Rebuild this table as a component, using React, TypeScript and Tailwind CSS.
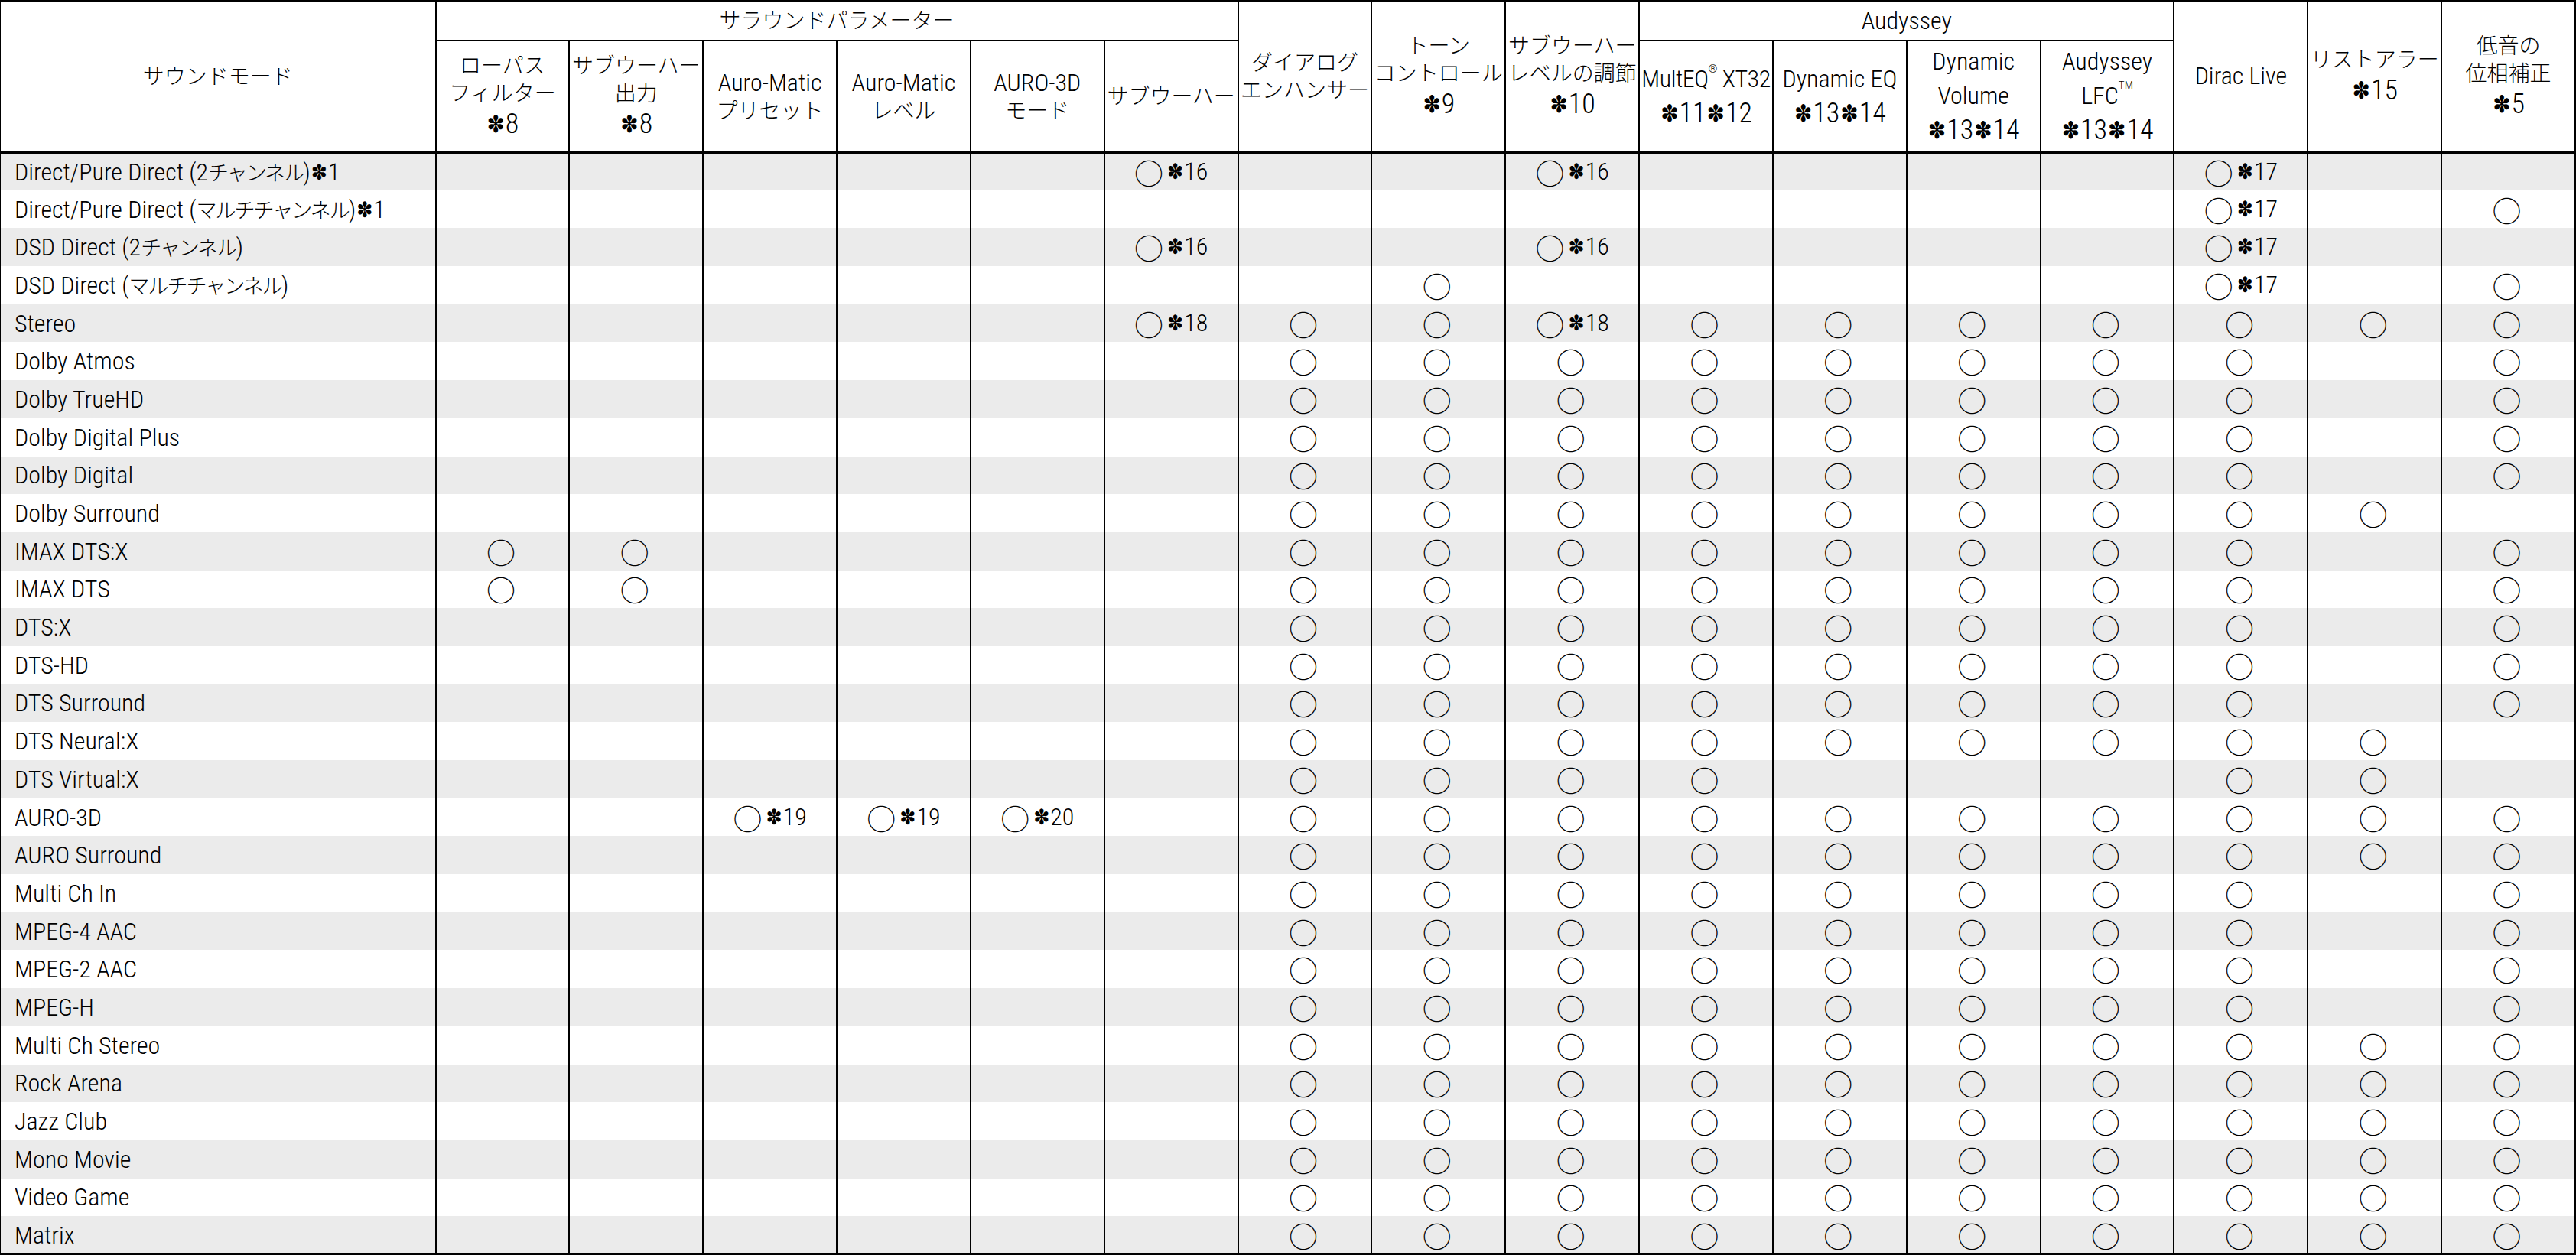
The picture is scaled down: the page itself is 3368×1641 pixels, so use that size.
import React from "react";

const JP = /[\u3040-\u30ff\u3400-\u9fff\uff00-\uffef]+|✽|○/g;

function Rich({ text, jp = "text-[28px]", big = false }: { text: string; jp?: string; big?: boolean }) {
  const out: React.ReactNode[] = [];
  let last = 0;
  let m: RegExpExecArray | null;
  let k = 0;
  JP.lastIndex = 0;
  while ((m = JP.exec(text)) !== null) {
    if (m.index > last) out.push(<span key={k++}>{text.slice(last, m.index)}</span>);
    const s = m[0];
    if (s === "✽") {
      out.push(<Ast key={k++} big={big} />);
    } else if (s === "○") {
      out.push(<Circ key={k++} />);
    } else {
      out.push(
        <span key={k++} className={jp}>
          {s}
        </span>
      );
    }
    last = m.index + s.length;
  }
  if (last < text.length) out.push(<span key={k++}>{text.slice(last)}</span>);
  return <>{out}</>;
}

function Ast({ big }: { big: boolean }) {
  return big ? (
    <span className="inline-block font-['DejaVu_Sans'] font-normal text-[31px] leading-none align-[1px] mx-[1px]">✽</span>
  ) : (
    <span className="inline-block font-['DejaVu_Sans'] font-normal text-[28px] leading-none align-[1px] mx-[1px]">✽</span>
  );
}

function Circ() {
  return (
    <span className="inline-block font-['Noto_Sans_CJK_JP'] font-light text-[38px] leading-none align-[-6px] mr-[4px]">○</span>
  );
}

type Line = { t: string; h: string; big?: boolean };

function HeadLines({ lines }: { lines: Line[] }) {
  return (
    <div className="flex flex-col items-center">
      {lines.map((l, i) => (
        <div key={i} className={"whitespace-nowrap " + l.h}>
          <Rich text={l.t} big={!!l.big} />
        </div>
      ))}
    </div>
  );
}

const J = "leading-[35px]";
const L = "leading-[45px]";
const A = "leading-[44px] text-[36px]";
const AL = "leading-[45px] text-[36px]";

const O = "○";
const std = (r: string, b: string) => ["", "", "", "", "", "", O, O, O, O, O, O, O, O, r, b];

const rows: [string, string[]][] = [
  ["Direct/Pure Direct (2チャンネル)✽1", ["", "", "", "", "", "○✽16", "", "", "○✽16", "", "", "", "", "○✽17", "", ""]],
  ["Direct/Pure Direct (マルチチャンネル)✽1", ["", "", "", "", "", "", "", "", "", "", "", "", "", "○✽17", "", O]],
  ["DSD Direct (2チャンネル)", ["", "", "", "", "", "○✽16", "", "", "○✽16", "", "", "", "", "○✽17", "", ""]],
  ["DSD Direct (マルチチャンネル)", ["", "", "", "", "", "", "", O, "", "", "", "", "", "○✽17", "", O]],
  ["Stereo", ["", "", "", "", "", "○✽18", O, O, "○✽18", O, O, O, O, O, O, O]],
  ["Dolby Atmos", std("", O)],
  ["Dolby TrueHD", std("", O)],
  ["Dolby Digital Plus", std("", O)],
  ["Dolby Digital", std("", O)],
  ["Dolby Surround", std(O, "")],
  ["IMAX DTS:X", [O, O, "", "", "", "", O, O, O, O, O, O, O, O, "", O]],
  ["IMAX DTS", [O, O, "", "", "", "", O, O, O, O, O, O, O, O, "", O]],
  ["DTS:X", std("", O)],
  ["DTS-HD", std("", O)],
  ["DTS Surround", std("", O)],
  ["DTS Neural:X", std(O, "")],
  ["DTS Virtual:X", ["", "", "", "", "", "", O, O, O, O, "", "", "", O, O, ""]],
  ["AURO-3D", ["", "", "○✽19", "○✽19", "○✽20", "", O, O, O, O, O, O, O, O, O, O]],
  ["AURO Surround", std(O, O)],
  ["Multi Ch In", std("", O)],
  ["MPEG-4 AAC", std("", O)],
  ["MPEG-2 AAC", std("", O)],
  ["MPEG-H", std("", O)],
  ["Multi Ch Stereo", std(O, O)],
  ["Rock Arena", std(O, O)],
  ["Jazz Club", std(O, O)],
  ["Mono Movie", std(O, O)],
  ["Video Game", std(O, O)],
  ["Matrix", std(O, O)],
];

const thTop = "border-2 border-black border-b-[3px] align-middle font-light p-0";
const thGroup = "border-2 border-black align-middle font-light p-0";
const thSub = "border-2 border-black border-b-[3px] align-middle font-light p-0";

export default function App() {
  return (
    <div className="w-[3368px] h-[1641px] bg-white text-black overflow-hidden font-['Roboto','Noto_Sans_CJK_JP',sans-serif] font-stretch-condensed font-light text-[32px]">
      <table className="w-[3368px] table-fixed border-collapse">
        <colgroup>
          <col className="w-[569px]" />
          {Array.from({ length: 16 }).map((_, i) => (
            <col key={i} />
          ))}
        </colgroup>
        <thead>
          <tr className="h-[52px]">
            <th rowSpan={2} className={thTop + " border-l"}>
              <HeadLines lines={[{ t: "サウンドモード", h: J }]} />
            </th>
            <th colSpan={6} className={thGroup}>
              <HeadLines lines={[{ t: "サラウンドパラメーター", h: J }]} />
            </th>
            <th rowSpan={2} className={thTop}>
              <HeadLines lines={[{ t: "ダイアログ", h: J }, { t: "エンハンサー", h: J }]} />
            </th>
            <th rowSpan={2} className={thTop}>
              <HeadLines lines={[{ t: "トーン", h: J }, { t: "コントロール", h: J }, { t: "✽9", h: A, big: true }]} />
            </th>
            <th rowSpan={2} className={thTop}>
              <HeadLines lines={[{ t: "サブウーハー", h: J }, { t: "レベルの調節", h: J }, { t: "✽10", h: A, big: true }]} />
            </th>
            <th colSpan={4} className={thGroup}>
              <HeadLines lines={[{ t: "Audyssey", h: L }]} />
            </th>
            <th rowSpan={2} className={thTop}>
              <HeadLines lines={[{ t: "Dirac Live", h: L }]} />
            </th>
            <th rowSpan={2} className={thTop}>
              <HeadLines lines={[{ t: "リストアラー", h: J }, { t: "✽15", h: A, big: true }]} />
            </th>
            <th rowSpan={2} className={thTop + " border-r-2"}>
              <HeadLines lines={[{ t: "低音の", h: J }, { t: "位相補正", h: J }, { t: "✽5", h: A, big: true }]} />
            </th>
          </tr>
          <tr className="h-[146px]">
            <th className={thSub}>
              <HeadLines lines={[{ t: "ローパス", h: J }, { t: "フィルター", h: J }, { t: "✽8", h: A, big: true }]} />
            </th>
            <th className={thSub}>
              <HeadLines lines={[{ t: "サブウーハー", h: J }, { t: "出力", h: J }, { t: "✽8", h: A, big: true }]} />
            </th>
            <th className={thSub}>
              <HeadLines lines={[{ t: "Auro-Matic", h: "leading-[38px]" }, { t: "プリセット", h: J }]} />
            </th>
            <th className={thSub}>
              <HeadLines lines={[{ t: "Auro-Matic", h: "leading-[38px]" }, { t: "レベル", h: J }]} />
            </th>
            <th className={thSub}>
              <HeadLines lines={[{ t: "AURO-3D", h: "leading-[38px]" }, { t: "モード", h: J }]} />
            </th>
            <th className={thSub}>
              <HeadLines lines={[{ t: "サブウーハー", h: J }]} />
            </th>
            <th className={thSub}>
              <div className="flex flex-col items-center">
                <div className="whitespace-nowrap leading-[45px] tracking-[-0.5px]">
                  MultEQ<sup className="text-[15px] align-[12px]">®</sup> XT32
                </div>
                <div className={"whitespace-nowrap " + A}>
                  <Rich text="✽11✽12" big />
                </div>
              </div>
            </th>
            <th className={thSub}>
              <HeadLines lines={[{ t: "Dynamic EQ", h: L }, { t: "✽13✽14", h: A, big: true }]} />
            </th>
            <th className={thSub}>
              <HeadLines lines={[{ t: "Dynamic", h: L }, { t: "Volume", h: L }, { t: "✽13✽14", h: AL, big: true }]} />
            </th>
            <th className={thSub}>
              <div className="flex flex-col items-center">
                <div className={"whitespace-nowrap " + L}>Audyssey</div>
                <div className={"whitespace-nowrap " + L}>
                  LFC<sup className="text-[15px] align-[12px]">TM</sup>
                </div>
                <div className={"whitespace-nowrap " + AL}>
                  <Rich text="✽13✽14" big />
                </div>
              </div>
            </th>
          </tr>
        </thead>
        <tbody>
          {rows.map(([label, marks], ri) => (
            <tr key={ri} className={"h-[49.7px] " + (ri % 2 === 0 ? "bg-[#ebebeb]" : "bg-white")}>
              <td className={"border-x-2 border-l border-black pl-[18px] pr-0 py-0 align-middle whitespace-nowrap leading-none " + (ri === rows.length - 1 ? "border-b-2" : "")}>
                <Rich text={label} jp="text-[27px] tracking-[-2px]" />
              </td>
              {marks.map((mk, ci) => (
                <td
                  key={ci}
                  className={"border-x-2 border-black p-0 text-center align-middle whitespace-nowrap leading-none " + (ri === rows.length - 1 ? "border-b-2" : "")}
                >
                  {mk ? <Rich text={mk} /> : null}
                </td>
              ))}
            </tr>
          ))}
        </tbody>
      </table>
    </div>
  );
}
